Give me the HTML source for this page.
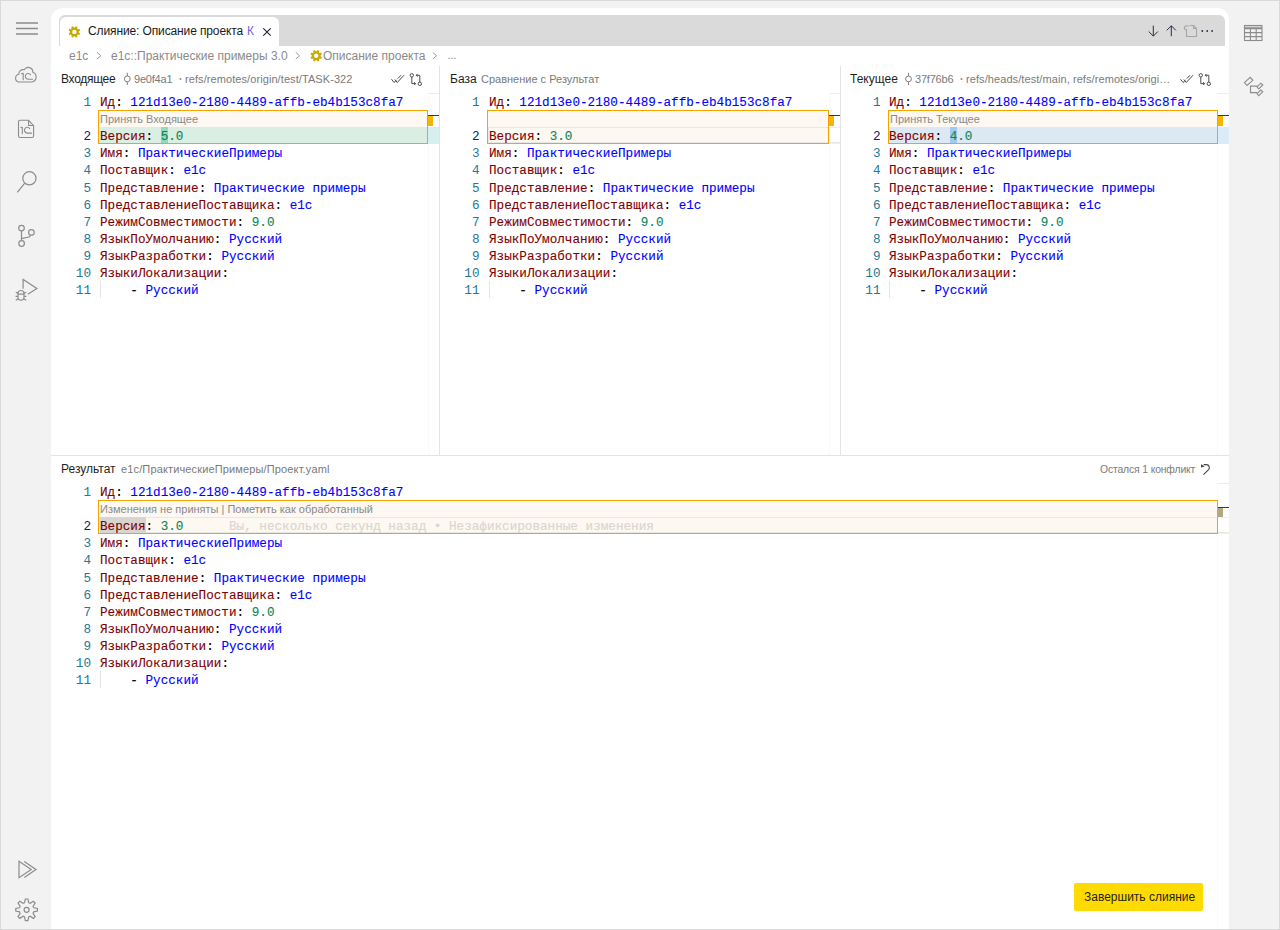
<!DOCTYPE html>
<html><head><meta charset="utf-8">
<style>
*{margin:0;padding:0;box-sizing:border-box}
html,body{width:1280px;height:930px;overflow:hidden}
body{background:#f2f2f2;position:relative;font-family:"Liberation Sans",sans-serif;color:#1f1f1f}
.abs{position:absolute}
#frame{position:absolute;left:0;top:0;width:1280px;height:930px;border:1px solid #d9d9d9;pointer-events:none}
#panel{position:absolute;left:51px;top:8px;width:1178px;height:921px;background:#fff;border-radius:12px 12px 0 0}
#tabbar{position:absolute;left:59px;top:15px;width:1166px;height:31px;background:#dadada;border-radius:6px 6px 0 0}
#tab{position:absolute;left:60px;top:17px;width:219px;height:29px;background:#fff;border-radius:6px 6px 0 0}
.t{position:absolute;white-space:pre;line-height:1}
.crumb{font-size:12px;color:#8a8a8a}
.hdr{font-size:12px;color:#1f1f1f}
.sub{font-size:11px;color:#7a7a7a}
.code{font-family:"Liberation Mono",monospace;font-size:12.65px;white-space:pre;position:absolute;line-height:17px;height:17px;-webkit-text-stroke:0.1px currentColor}
.ln{font-family:"Liberation Mono",monospace;font-size:12.65px;position:absolute;line-height:17px;height:17px;text-align:right;color:#237893;width:30px}
.act{color:#0b216f}.blame{color:#d9d5d0}
.k{color:#800000}.v{color:#0000ff}.n{color:#098658}.p{color:#000}
.vline{position:absolute;width:1px;background:#e3e3e3}
.hline{position:absolute;height:1px;background:#e3e3e3}
.box{position:absolute;border:1px solid #f5a300}
.zone{position:absolute;background:#fdf8f1}
.ztext{position:absolute;font-size:11px;color:#8a8a8a;white-space:pre;line-height:17px;padding-top:1px}
.ruler{position:absolute;border-left:1px solid #fafafa;border-top:1px solid #ececec}
svg{position:absolute;overflow:visible}
</style></head><body>
<div id="panel"></div>
<div id="frame"></div>

<!-- left activity bar -->
<svg style="left:0;top:0" width="50" height="930" viewBox="0 0 50 930">
  <g stroke="#8c8c8c" stroke-width="1.5" fill="none">
    <path d="M16 23H38M16 28.5H38M16 34H38"/>
  </g>
  <g stroke="#8c8c8c" stroke-width="1.1" fill="none" stroke-linecap="round" stroke-linejoin="round">
    <!-- cloud -->
    <path d="M18.6 82 H31.5 A5 5 0 0 0 32.8 72.3 A4.6 4.6 0 0 0 24.2 69.8 A4.2 4.2 0 0 0 18.8 74.2 A4 4 0 0 0 18.6 82 Z"/>
    <path d="M21.6 73.6 L23.2 73.4 V79.7"/>
    <path d="M30.6 74.8 A2.9 2.9 0 1 0 28.1 79.3 H32.6"/>
    <!-- doc -->
    <path d="M20 120.3 H28.6 L33.6 125.6 V136 A1.5 1.5 0 0 1 32.1 137.5 H20 A1.5 1.5 0 0 1 18.5 136 V121.8 A1.5 1.5 0 0 1 20 120.3 Z"/>
    <path d="M28.6 120.5 V125.5 H33.4"/>
    <path d="M20.8 127.5 L22.3 127.3 V133.6"/>
    <path d="M29.8 128.6 A2.9 2.9 0 1 0 27.3 133.1 H31.6"/>
  </g>
  <g stroke="#8c8c8c" stroke-width="1.2" fill="none">
    <!-- search -->
    <circle cx="29.4" cy="178.3" r="6.6"/>
    <path d="M24.6 183.3 L17.3 192.3"/>
    <!-- branch -->
    <circle cx="21.5" cy="228.1" r="2.8"/>
    <circle cx="31.4" cy="232.4" r="2.8"/>
    <circle cx="21.6" cy="243.5" r="2.8"/>
    <path d="M21.5 230.9 V240.7 M21.6 238.6 L29.6 236.8 L30.6 235.2"/>
    <!-- debug -->
    <path d="M23.1 288.8 V279.4 L36.9 288.5 L27.8 294.2"/>
    <path d="M18 293.5 A3 3 0 0 1 24 293.5 V297 A3 3.2 0 0 1 18 297 Z M18 294.2 H24 M15.8 292.4 L18 293.2 M26.2 292.4 L24 293.2 M15.6 296.4 H18 M26.4 296.4 H24 M15.8 300.3 L18.2 298.8 M26.2 300.3 L23.8 298.8"/>
    <!-- run -->
    <path d="M19 861.3 L31.2 869.5 L19 877.7 Z"/>
    <path d="M24.3 861.4 L36 869.5 L24.3 877.6"/>
    <!-- gear -->
    <path d="M33.71 907.74 L37.42 908.52 L37.42 911.08 L33.71 911.86 L33.08 913.36 L35.16 916.55 L33.35 918.36 L30.16 916.28 L28.66 916.91 L27.88 920.62 L25.32 920.62 L24.54 916.91 L23.04 916.28 L19.85 918.36 L18.04 916.55 L20.12 913.36 L19.49 911.86 L15.78 911.08 L15.78 908.52 L19.49 907.74 L20.12 906.24 L18.04 903.05 L19.85 901.24 L23.04 903.32 L24.54 902.69 L25.32 898.98 L27.88 898.98 L28.66 902.69 L30.16 903.32 L33.35 901.24 L35.16 903.05 L33.08 906.24 Z"/>
    <circle cx="26.6" cy="909.8" r="2.5"/>
  </g>
</svg>
<!-- right activity bar -->
<svg style="left:1229px;top:0" width="51" height="120" viewBox="1229 0 51 120">
  <g stroke="#8c8c8c" stroke-width="1.1" fill="none">
    <rect x="1244.5" y="25.5" width="17.5" height="15"/>
    <path d="M1244.5 27.3 H1262 M1244.5 28.6 H1262 M1244.5 32.6 H1262 M1244.5 36.6 H1262 M1250.4 28.6 V40.5 M1256.2 28.6 V40.5"/>
    <path d="M1244.4 82.6 L1250.2 77.4 L1252.8 80.3 L1247 85.5 Z"/>
    <path d="M1257 86.8 L1260.8 83.2 L1262.8 85 L1258.7 88.9 Z"/>
    <path d="M1257 93.6 L1260.8 90 L1262.8 91.8 L1258.7 95.7 Z"/>
    <path d="M1250.5 85.5 V92.6 H1257.2 M1250.5 86.1 H1257.8"/>
  </g>
</svg>
<!-- tab bar -->
<div id="tabbar"></div>
<div id="tab"></div>
<div class="t" style="left:88px;top:25px;font-size:12px;color:#1a1a1a;letter-spacing:-0.12px">Слияние: Описание проекта</div>
<div class="t" style="left:247px;top:25px;font-size:12px;color:#7b5fd0">К</div>

<svg style="left:0;top:0" width="1280" height="100" viewBox="0 0 1280 100">
  <path fill="#c9a800" fill-rule="evenodd" d="M78.85 32.59 L80.16 33.16 L79.37 35.08 L78.03 34.56 L77.06 35.53 L77.58 36.87 L75.66 37.66 L75.09 36.35 L73.71 36.35 L73.14 37.66 L71.22 36.87 L71.74 35.53 L70.77 34.56 L69.43 35.08 L68.64 33.16 L69.95 32.59 L69.95 31.21 L68.64 30.64 L69.43 28.72 L70.77 29.24 L71.74 28.27 L71.22 26.93 L73.14 26.14 L73.71 27.45 L75.09 27.45 L75.66 26.14 L77.58 26.93 L77.06 28.27 L78.03 29.24 L79.37 28.72 L80.16 30.64 L78.85 31.21 Z M74.4 29.7 A2.2 2.2 0 1 0 74.4 34.1 A2.2 2.2 0 1 0 74.4 29.7 Z"/>
  <path fill="#c9a800" fill-rule="evenodd" d="M320.65 56.49 L321.96 57.06 L321.17 58.98 L319.83 58.46 L318.86 59.43 L319.38 60.77 L317.46 61.56 L316.89 60.25 L315.51 60.25 L314.94 61.56 L313.02 60.77 L313.54 59.43 L312.57 58.46 L311.23 58.98 L310.44 57.06 L311.75 56.49 L311.75 55.11 L310.44 54.54 L311.23 52.62 L312.57 53.14 L313.54 52.17 L313.02 50.83 L314.94 50.04 L315.51 51.35 L316.89 51.35 L317.46 50.04 L319.38 50.83 L318.86 52.17 L319.83 53.14 L321.17 52.62 L321.96 54.54 L320.65 55.11 Z M316.2 53.6 A2.2 2.2 0 1 0 316.2 58 A2.2 2.2 0 1 0 316.2 53.6 Z"/>
  <g stroke="#1b1b33" stroke-width="1.05" fill="none"><path d="M263.3 28.3 L270.7 35.7 M270.7 28.3 L263.3 35.7"/></g>
  <g stroke="#9a9a9a" stroke-width="1" fill="none">
    <path d="M97 52.4 L100.8 55.7 L97 59 M295.8 52.4 L299.6 55.7 L295.8 59 M432.8 52.4 L436.6 55.7 L432.8 59"/>
  </g>
  <!-- top right toolbar -->
  <g stroke="#2c2c44" stroke-width="1" fill="none">
    <path d="M1153.3 25.6 V36 M1148.7 31.5 L1153.3 36.1 L1157.9 31.5"/>
    <path d="M1171.3 25.8 V36.2 M1166.7 30.4 L1171.3 25.8 L1175.9 30.4"/>
  </g>
  <g stroke="#a6a6a6" stroke-width="1.1" fill="none">
    <path d="M1189.5 25.5 H1193.5 L1196.5 28.5 V36.5 H1186.5 V29.5"/>
    <path d="M1193.5 25.5 V28.5 H1196.5"/>
    <path d="M1188.5 26.5 A2 2 0 0 0 1185 29.5 L1187 30"/>
  </g>
  <g fill="#2c2c44"><circle cx="1202.3" cy="31" r="0.9"/><circle cx="1207.2" cy="31" r="0.9"/><circle cx="1212.1" cy="31" r="0.9"/></g>
  <!-- header icons -->
  <g stroke="#7f7f7f" stroke-width="1" fill="none">
    <circle cx="127.3" cy="78.9" r="2.9"/><path d="M127.3 72.8 V76 M127.3 81.8 V85"/>
    <circle cx="908.5" cy="78.9" r="2.9"/><path d="M908.5 72.8 V76 M908.5 81.8 V85"/>
  </g>
  <g fill="#8a8a8a"><circle cx="180.5" cy="79" r="1"/><circle cx="961.5" cy="79" r="1"/></g>
  <g stroke="#4a4a55" stroke-width="1" fill="none">
    <path d="M391.5 79.2 L394 82.5 L396.5 80.2 M394.8 79.5 L397.3 82.5 L404 75.2 M397.8 78.6 L401 75.2"/>
    <circle cx="411.8" cy="75.3" r="1.7"/><path d="M411.8 77 V83.6 H415.6 M414.2 82.2 L415.6 83.6 L414.2 85"/>
    <circle cx="419.8" cy="83.8" r="1.7"/><path d="M419.8 82.1 V75.3 H416.2 M417.6 73.9 L416.2 75.3 L417.6 76.7"/>
    <path d="M1180.5 79.2 L1183 82.5 L1185.5 80.2 M1183.8 79.5 L1186.3 82.5 L1193 75.2 M1186.8 78.6 L1190 75.2"/>
    <circle cx="1200.8" cy="75.3" r="1.7"/><path d="M1200.8 77 V83.6 H1204.6 M1203.2 82.2 L1204.6 83.6 L1203.2 85"/>
    <circle cx="1208.8" cy="83.8" r="1.7"/><path d="M1208.8 82.1 V75.3 H1205.2 M1206.6 73.9 L1205.2 75.3 L1206.6 76.7"/>
  </g>
</svg>
<svg style="left:0;top:440px" width="1280" height="50" viewBox="0 440 1280 50">
  <path d="M1203.6 464.6 H1206.5 A3 3 0 0 1 1208.6 469.6 L1203.5 474.6" stroke="#444" stroke-width="1.1" fill="none"/>
  <path d="M1201 464.2 L1201 467.4 L1204.8 466.6 Z" fill="#444"/>
</svg>
<!-- breadcrumb -->
<div class="t crumb" style="left:69px;top:50px">e1c</div>
<div class="t crumb" style="left:111px;top:50px">e1c::Практические примеры 3.0</div>
<div class="t crumb" style="left:323px;top:50px">Описание проекта</div>
<div class="t crumb" style="left:447.5px;top:50px;font-size:11px">...</div>

<!-- pane dividers -->
<div class="vline" style="left:439px;top:66px;height:389px"></div>
<div class="vline" style="left:840px;top:66px;height:389px"></div>
<div class="hline" style="left:51px;top:455px;width:1178px"></div>

<!-- headers -->
<div class="t hdr" style="left:61px;top:73px;letter-spacing:-0.3px">Входящее</div>
<div class="t sub" style="left:134px;top:74px;letter-spacing:-0.2px">9e0f4a1</div>
<div class="t sub" style="left:185px;top:74px;letter-spacing:0.08px">refs/remotes/origin/test/TASK-322</div>

<div class="t hdr" style="left:450px;top:73px">База</div>
<div class="t sub" style="left:481px;top:74px">Сравнение с Результат</div>

<div class="t hdr" style="left:850px;top:73px">Текущее</div>
<div class="t sub" style="left:915px;top:74px;letter-spacing:-0.2px">37f76b6</div>
<div class="t sub" style="left:966px;top:74px;letter-spacing:0.08px">refs/heads/test/main, refs/remotes/origi…</div>

<div class="t hdr" style="left:61px;top:463px">Результат</div>
<div class="t sub" style="left:121px;top:464px;letter-spacing:0.14px">e1c/ПрактическиеПримеры/Проект.yaml</div>
<div class="t" style="left:1100px;top:465px;font-size:10.4px;color:#7a7a7a;letter-spacing:-0.15px">Остался 1 конфликт</div>

<div class="zone" style="left:98px;top:110px;width:330px;height:34px"></div>
<div class="abs" style="left:99px;top:127px;width:340px;height:17px;background:#daeee3"></div>
<div class="abs" style="left:160.72px;top:127px;width:7.59px;height:16px;background:#93d9bf"></div>
<div class="ztext" style="left:100px;top:110px">Принять Входящее</div>
<div class="ruler" style="left:428px;top:93px;width:11px;height:362px"></div>
<div class="abs" style="left:428px;top:115px;width:11px;height:1.2px;background:#3a3a3a"></div>
<div class="abs" style="left:428px;top:116px;width:4.8px;height:10px;background:#f7b500"></div>
<div class="abs" style="left:428px;top:127px;width:11px;height:17px;background:#d6f0ef"></div>
<div class="box" style="left:98px;top:110px;width:330px;height:34px"></div>
<div class="abs" style="left:100px;top:281px;width:1px;height:17px;background:#e4e4e4"></div>
<div class="ln" style="left:51px;top:94.00px;width:40px">1</div>
<div class="code" style="left:100px;top:94.00px"><span class="k">Ид</span><span class="p">: </span><span class="v">121d13e0-2180-4489-affb-eb4b153c8fa7</span></div>
<div class="ln act" style="left:51px;top:128.22px;width:40px">2</div>
<div class="code" style="left:100px;top:128.22px"><span class="k">Версия</span><span class="p">: </span><span class="n">5.0</span></div>
<div class="ln" style="left:51px;top:145.33px;width:40px">3</div>
<div class="code" style="left:100px;top:145.33px"><span class="k">Имя</span><span class="p">: </span><span class="v">ПрактическиеПримеры</span></div>
<div class="ln" style="left:51px;top:162.44px;width:40px">4</div>
<div class="code" style="left:100px;top:162.44px"><span class="k">Поставщик</span><span class="p">: </span><span class="v">e1c</span></div>
<div class="ln" style="left:51px;top:179.55px;width:40px">5</div>
<div class="code" style="left:100px;top:179.55px"><span class="k">Представление</span><span class="p">: </span><span class="v">Практические примеры</span></div>
<div class="ln" style="left:51px;top:196.66px;width:40px">6</div>
<div class="code" style="left:100px;top:196.66px"><span class="k">ПредставлениеПоставщика</span><span class="p">: </span><span class="v">e1c</span></div>
<div class="ln" style="left:51px;top:213.77px;width:40px">7</div>
<div class="code" style="left:100px;top:213.77px"><span class="k">РежимСовместимости</span><span class="p">: </span><span class="n">9.0</span></div>
<div class="ln" style="left:51px;top:230.88px;width:40px">8</div>
<div class="code" style="left:100px;top:230.88px"><span class="k">ЯзыкПоУмолчанию</span><span class="p">: </span><span class="v">Русский</span></div>
<div class="ln" style="left:51px;top:247.99px;width:40px">9</div>
<div class="code" style="left:100px;top:247.99px"><span class="k">ЯзыкРазработки</span><span class="p">: </span><span class="v">Русский</span></div>
<div class="ln" style="left:51px;top:265.10px;width:40px">10</div>
<div class="code" style="left:100px;top:265.10px"><span class="k">ЯзыкиЛокализации</span><span class="p">:</span></div>
<div class="ln" style="left:51px;top:282.21px;width:40px">11</div>
<div class="code" style="left:100px;top:282.21px"><span class="p">    - </span><span class="v">Русский</span></div>
<div class="zone" style="left:487px;top:110px;width:342px;height:34px"></div>
<div class="abs" style="left:488px;top:127px;width:352px;height:16px;border:1px solid #ebe7e1;border-right:none"></div>
<div class="ruler" style="left:829px;top:93px;width:11px;height:362px"></div>
<div class="abs" style="left:829px;top:115px;width:11px;height:1.2px;background:#3a3a3a"></div>
<div class="abs" style="left:829px;top:116px;width:4.8px;height:10px;background:#f7b500"></div>
<div class="abs" style="left:829px;top:127px;width:11px;height:17px;border:1px solid #eeeeee;border-right:none"></div>
<div class="box" style="left:487px;top:110px;width:342px;height:34px"></div>
<div class="abs" style="left:489px;top:281px;width:1px;height:17px;background:#e4e4e4"></div>
<div class="ln" style="left:439.5px;top:94.00px;width:40px">1</div>
<div class="code" style="left:489px;top:94.00px"><span class="k">Ид</span><span class="p">: </span><span class="v">121d13e0-2180-4489-affb-eb4b153c8fa7</span></div>
<div class="ln act" style="left:439.5px;top:128.22px;width:40px">2</div>
<div class="code" style="left:489px;top:128.22px"><span class="k">Версия</span><span class="p">: </span><span class="n">3.0</span></div>
<div class="ln" style="left:439.5px;top:145.33px;width:40px">3</div>
<div class="code" style="left:489px;top:145.33px"><span class="k">Имя</span><span class="p">: </span><span class="v">ПрактическиеПримеры</span></div>
<div class="ln" style="left:439.5px;top:162.44px;width:40px">4</div>
<div class="code" style="left:489px;top:162.44px"><span class="k">Поставщик</span><span class="p">: </span><span class="v">e1c</span></div>
<div class="ln" style="left:439.5px;top:179.55px;width:40px">5</div>
<div class="code" style="left:489px;top:179.55px"><span class="k">Представление</span><span class="p">: </span><span class="v">Практические примеры</span></div>
<div class="ln" style="left:439.5px;top:196.66px;width:40px">6</div>
<div class="code" style="left:489px;top:196.66px"><span class="k">ПредставлениеПоставщика</span><span class="p">: </span><span class="v">e1c</span></div>
<div class="ln" style="left:439.5px;top:213.77px;width:40px">7</div>
<div class="code" style="left:489px;top:213.77px"><span class="k">РежимСовместимости</span><span class="p">: </span><span class="n">9.0</span></div>
<div class="ln" style="left:439.5px;top:230.88px;width:40px">8</div>
<div class="code" style="left:489px;top:230.88px"><span class="k">ЯзыкПоУмолчанию</span><span class="p">: </span><span class="v">Русский</span></div>
<div class="ln" style="left:439.5px;top:247.99px;width:40px">9</div>
<div class="code" style="left:489px;top:247.99px"><span class="k">ЯзыкРазработки</span><span class="p">: </span><span class="v">Русский</span></div>
<div class="ln" style="left:439.5px;top:265.10px;width:40px">10</div>
<div class="code" style="left:489px;top:265.10px"><span class="k">ЯзыкиЛокализации</span><span class="p">:</span></div>
<div class="ln" style="left:439.5px;top:282.21px;width:40px">11</div>
<div class="code" style="left:489px;top:282.21px"><span class="p">    - </span><span class="v">Русский</span></div>
<div class="zone" style="left:888px;top:110px;width:330px;height:34px"></div>
<div class="abs" style="left:889px;top:127px;width:340px;height:17px;background:#dce8f2"></div>
<div class="abs" style="left:949.72px;top:127px;width:7.59px;height:16px;background:#9ecbee"></div>
<div class="ztext" style="left:890px;top:110px">Принять Текущее</div>
<div class="ruler" style="left:1217px;top:93px;width:12px;height:362px"></div>
<div class="abs" style="left:1217px;top:115px;width:12px;height:1.2px;background:#3a3a3a"></div>
<div class="abs" style="left:1218px;top:116px;width:4.8px;height:10px;background:#f7b500"></div>
<div class="abs" style="left:1217px;top:127px;width:12px;height:17px;background:#dcebf8"></div>
<div class="box" style="left:888px;top:110px;width:330px;height:34px"></div>
<div class="abs" style="left:889px;top:281px;width:1px;height:17px;background:#e4e4e4"></div>
<div class="ln" style="left:840.5px;top:94.00px;width:40px">1</div>
<div class="code" style="left:889px;top:94.00px"><span class="k">Ид</span><span class="p">: </span><span class="v">121d13e0-2180-4489-affb-eb4b153c8fa7</span></div>
<div class="ln act" style="left:840.5px;top:128.22px;width:40px">2</div>
<div class="code" style="left:889px;top:128.22px"><span class="k">Версия</span><span class="p">: </span><span class="n">4.0</span></div>
<div class="ln" style="left:840.5px;top:145.33px;width:40px">3</div>
<div class="code" style="left:889px;top:145.33px"><span class="k">Имя</span><span class="p">: </span><span class="v">ПрактическиеПримеры</span></div>
<div class="ln" style="left:840.5px;top:162.44px;width:40px">4</div>
<div class="code" style="left:889px;top:162.44px"><span class="k">Поставщик</span><span class="p">: </span><span class="v">e1c</span></div>
<div class="ln" style="left:840.5px;top:179.55px;width:40px">5</div>
<div class="code" style="left:889px;top:179.55px"><span class="k">Представление</span><span class="p">: </span><span class="v">Практические примеры</span></div>
<div class="ln" style="left:840.5px;top:196.66px;width:40px">6</div>
<div class="code" style="left:889px;top:196.66px"><span class="k">ПредставлениеПоставщика</span><span class="p">: </span><span class="v">e1c</span></div>
<div class="ln" style="left:840.5px;top:213.77px;width:40px">7</div>
<div class="code" style="left:889px;top:213.77px"><span class="k">РежимСовместимости</span><span class="p">: </span><span class="n">9.0</span></div>
<div class="ln" style="left:840.5px;top:230.88px;width:40px">8</div>
<div class="code" style="left:889px;top:230.88px"><span class="k">ЯзыкПоУмолчанию</span><span class="p">: </span><span class="v">Русский</span></div>
<div class="ln" style="left:840.5px;top:247.99px;width:40px">9</div>
<div class="code" style="left:889px;top:247.99px"><span class="k">ЯзыкРазработки</span><span class="p">: </span><span class="v">Русский</span></div>
<div class="ln" style="left:840.5px;top:265.10px;width:40px">10</div>
<div class="code" style="left:889px;top:265.10px"><span class="k">ЯзыкиЛокализации</span><span class="p">:</span></div>
<div class="ln" style="left:840.5px;top:282.21px;width:40px">11</div>
<div class="code" style="left:889px;top:282.21px"><span class="p">    - </span><span class="v">Русский</span></div>
<div class="zone" style="left:98px;top:500px;width:1120px;height:34px"></div>
<div class="abs" style="left:99px;top:517px;width:1130px;height:16px;border:1px solid #ebe7e1;border-right:none"></div>
<div class="abs" style="left:100.00px;top:517px;width:45.54px;height:16px;background:#d8d4cf"></div>
<div class="ztext" style="left:100px;top:500px">Изменения не приняты | Пометить как обработанный</div>
<div class="ruler" style="left:1217px;top:483px;width:12px;height:446px"></div>
<div class="abs" style="left:1217px;top:507px;width:12px;height:1.2px;background:#3a3a3a"></div>
<div class="abs" style="left:1218px;top:508px;width:4.8px;height:10px;background:#b3a684"></div>
<div class="abs" style="left:1217px;top:517px;width:12px;height:17px;border:1px solid #eeeeee;border-right:none"></div>
<div class="box" style="left:98px;top:500px;width:1120px;height:34px"></div>
<div class="abs" style="left:100px;top:671px;width:1px;height:17px;background:#e4e4e4"></div>
<div class="ln" style="left:51px;top:484.00px;width:40px">1</div>
<div class="code" style="left:100px;top:484.00px"><span class="k">Ид</span><span class="p">: </span><span class="v">121d13e0-2180-4489-affb-eb4b153c8fa7</span></div>
<div class="ln act" style="left:51px;top:518.22px;width:40px">2</div>
<div class="code" style="left:100px;top:518.22px"><span class="k">Версия</span><span class="p">: </span><span class="n">3.0</span></div>
<div class="ln" style="left:51px;top:535.33px;width:40px">3</div>
<div class="code" style="left:100px;top:535.33px"><span class="k">Имя</span><span class="p">: </span><span class="v">ПрактическиеПримеры</span></div>
<div class="ln" style="left:51px;top:552.44px;width:40px">4</div>
<div class="code" style="left:100px;top:552.44px"><span class="k">Поставщик</span><span class="p">: </span><span class="v">e1c</span></div>
<div class="ln" style="left:51px;top:569.55px;width:40px">5</div>
<div class="code" style="left:100px;top:569.55px"><span class="k">Представление</span><span class="p">: </span><span class="v">Практические примеры</span></div>
<div class="ln" style="left:51px;top:586.66px;width:40px">6</div>
<div class="code" style="left:100px;top:586.66px"><span class="k">ПредставлениеПоставщика</span><span class="p">: </span><span class="v">e1c</span></div>
<div class="ln" style="left:51px;top:603.77px;width:40px">7</div>
<div class="code" style="left:100px;top:603.77px"><span class="k">РежимСовместимости</span><span class="p">: </span><span class="n">9.0</span></div>
<div class="ln" style="left:51px;top:620.88px;width:40px">8</div>
<div class="code" style="left:100px;top:620.88px"><span class="k">ЯзыкПоУмолчанию</span><span class="p">: </span><span class="v">Русский</span></div>
<div class="ln" style="left:51px;top:637.99px;width:40px">9</div>
<div class="code" style="left:100px;top:637.99px"><span class="k">ЯзыкРазработки</span><span class="p">: </span><span class="v">Русский</span></div>
<div class="ln" style="left:51px;top:655.10px;width:40px">10</div>
<div class="code" style="left:100px;top:655.10px"><span class="k">ЯзыкиЛокализации</span><span class="p">:</span></div>
<div class="ln" style="left:51px;top:672.21px;width:40px">11</div>
<div class="code" style="left:100px;top:672.21px"><span class="p">    - </span><span class="v">Русский</span></div>
<div class="code blame" style="left:229.03px;top:518.22px">Вы, несколько секунд назад • Незафиксированные изменения</div>
<!-- button -->
<div class="abs" style="left:1074px;top:883px;width:129px;height:28px;background:#ffdb00;border-radius:2px"></div>
<div class="t" style="left:1084px;top:891px;font-size:12px;color:#1f1f1f">Завершить слияние</div>

</body></html>
